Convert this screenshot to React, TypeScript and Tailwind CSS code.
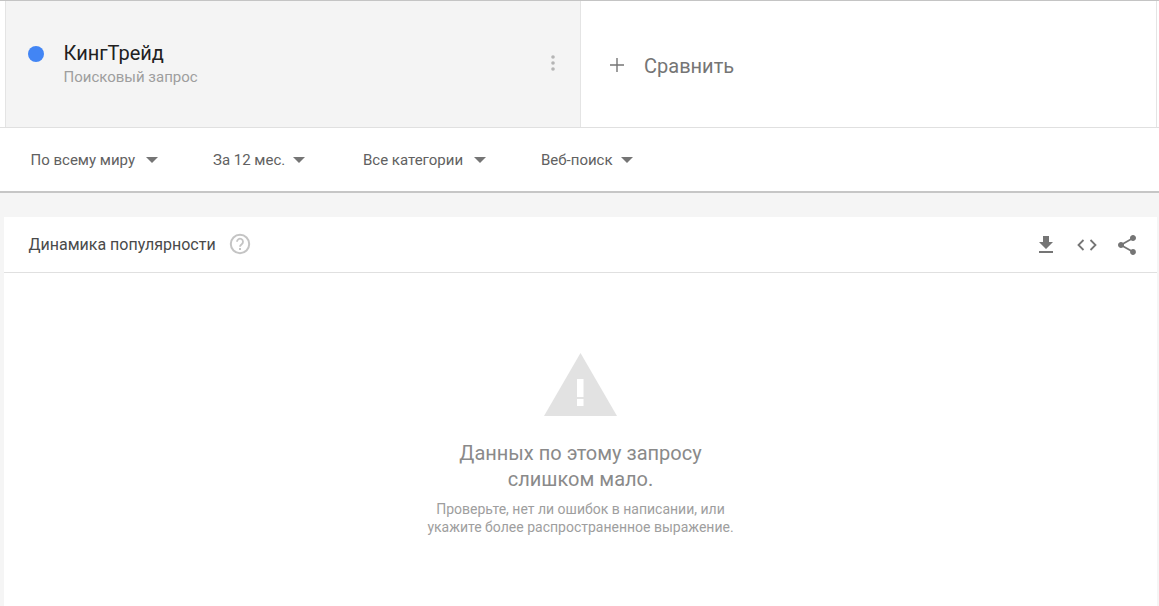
import React from "react";

function Caret({ className = "" }: { className?: string }) {
  return (
    <svg width="12" height="6" viewBox="0 0 12 6" className={className}>
      <path d="M0 0h12L6 6z" fill="#757575" />
    </svg>
  );
}

function Filter({ label, gap, width }: { label: string; gap: string; width: string }) {
  return (
    <div className={`flex items-center ${gap} ${width}`}>
      <span className="text-[15px] leading-5 text-[#616161]">{label}</span>
      <Caret />
    </div>
  );
}

export default function App() {
  return (
    <div className="h-[606px] w-[1159px] overflow-hidden bg-[#f5f5f5] font-['Roboto',sans-serif]">
      <section className="bg-white">
        <div className="flex h-[128px] border-t border-b border-t-[#c4c4c4] border-b-[#e0e0e0] pl-[5px] pr-[2px]">
          <div className="flex w-[576px] items-start border-x border-[#e4e4e4] bg-[#f4f4f4]">
            <span className="ml-[22px] mt-[45px] h-4 w-4 rounded-full bg-[#4285f4]" />
            <div className="ml-[19.5px] mt-[40px] flex-1">
              <div className="text-[20px] leading-6 text-[#212121]">КингТрейд</div>
              <div className="mt-[2px] text-[15px] leading-[20px] text-[#9e9e9e]">Поисковый запрос</div>
            </div>
            <svg width="4" height="16" viewBox="0 0 4 16" className="mr-[25px] mt-[54px]">
              <circle cx="2" cy="2" r="1.8" fill="#b5b5b5" />
              <circle cx="2" cy="8" r="1.8" fill="#b5b5b5" />
              <circle cx="2" cy="14" r="1.8" fill="#b5b5b5" />
            </svg>
          </div>
          <div className="flex flex-1 items-center border-r border-[#e4e4e4] pl-7 pt-[3px]">
            <svg width="16" height="16" viewBox="0 0 16 16" className="mb-[2px]">
              <path d="M7.3 1h1.4v6.3H15v1.4H8.7V15H7.3V8.7H1V7.3h6.3z" fill="#757575" />
            </svg>
            <span className="ml-[19px] text-[20px] leading-6 text-[#757575]">Сравнить</span>
          </div>
        </div>
        <div className="flex h-[65px] items-center border-b-2 border-[#c6c6c6] pl-[30.5px]">
          <Filter label="По всему миру" gap="gap-[11px]" width="w-[182.5px]" />
          <Filter label="За 12 мес." gap="gap-[8px]" width="w-[150px]" />
          <Filter label="Все категории" gap="gap-[11px]" width="w-[178px]" />
          <Filter label="Веб-поиск" gap="gap-[8px]" width="w-[120px]" />
        </div>
      </section>

      <section className="ml-[4px] mr-[2px] mt-[24px] h-[400px] bg-white">
        <header className="flex h-[56px] items-center border-b border-[#e0e0e0] pl-[24.5px] pr-[18px]">
          <span className="text-[16px] text-[#4a4a4a]">Динамика популярности</span>
          <svg width="24" height="24" viewBox="0 0 24 24" className="ml-[12px] mb-[2px]" fill="none">
            <circle cx="12" cy="12" r="9.2" stroke="#c4c4c4" strokeWidth="2" />
            <path d="M9 9.8a3 3 0 1 1 4.7 2.4c-1 .7-1.7 1.2-1.7 2.6" stroke="#c4c4c4" strokeWidth="1.8" />
            <rect x="11" y="16" width="2" height="2" fill="#c4c4c4" />
          </svg>
          <div className="ml-auto flex items-center gap-[16px]">
            <svg width="24" height="24" viewBox="0 0 24 24" fill="#757575" className="mr-[1px]">
              <path d="M19 9h-4V3H9v6H5l7 7 7-7zM5 18v2h14v-2H5z" />
            </svg>
            <svg width="24" height="24" viewBox="0 0 24 24" fill="none" stroke="#757575" strokeWidth="1.8">
              <path d="M8.5 7l-5 5 5 5M15.5 7l5 5-5 5" />
            </svg>
            <svg width="24" height="24" viewBox="0 0 24 24" fill="#757575">
              <path d="M18 16.08c-.76 0-1.44.3-1.96.77L8.91 12.7c.05-.23.09-.46.09-.7s-.04-.47-.09-.7l7.05-4.11c.54.5 1.25.81 2.04.81 1.66 0 3-1.34 3-3s-1.34-3-3-3-3 1.34-3 3c0 .24.04.47.09.7L8.04 9.81C7.5 9.31 6.79 9 6 9c-1.66 0-3 1.34-3 3s1.34 3 3 3c.79 0 1.5-.31 2.04-.81l7.12 4.16c-.05.21-.08.43-.08.65 0 1.61 1.31 2.92 2.92 2.92s2.92-1.31 2.92-2.92-1.31-2.92-2.92-2.92z" />
            </svg>
          </div>
        </header>
        <div className="flex flex-col items-center pt-[80px]">
          <svg width="73" height="63" viewBox="0 0 73 63">
            <path d="M36.5 0L73 63H0z" fill="#e2e2e2" />
            <rect x="33" y="26" width="6.5" height="18" fill="#fff" />
            <rect x="33" y="46" width="6.5" height="7" fill="#fff" />
          </svg>
          <div className="mt-[24px] text-center text-[20px] leading-[26px] text-[#8a8a8a]">
            Данных по этому запросу
            <br />
            слишком мало.
          </div>
          <div className="mt-[8px] text-center text-[14px] leading-[18px] text-[#9e9e9e]">
            Проверьте, нет ли ошибок в написании, или
            <br />
            укажите более распространенное выражение.
          </div>
        </div>
      </section>
    </div>
  );
}
